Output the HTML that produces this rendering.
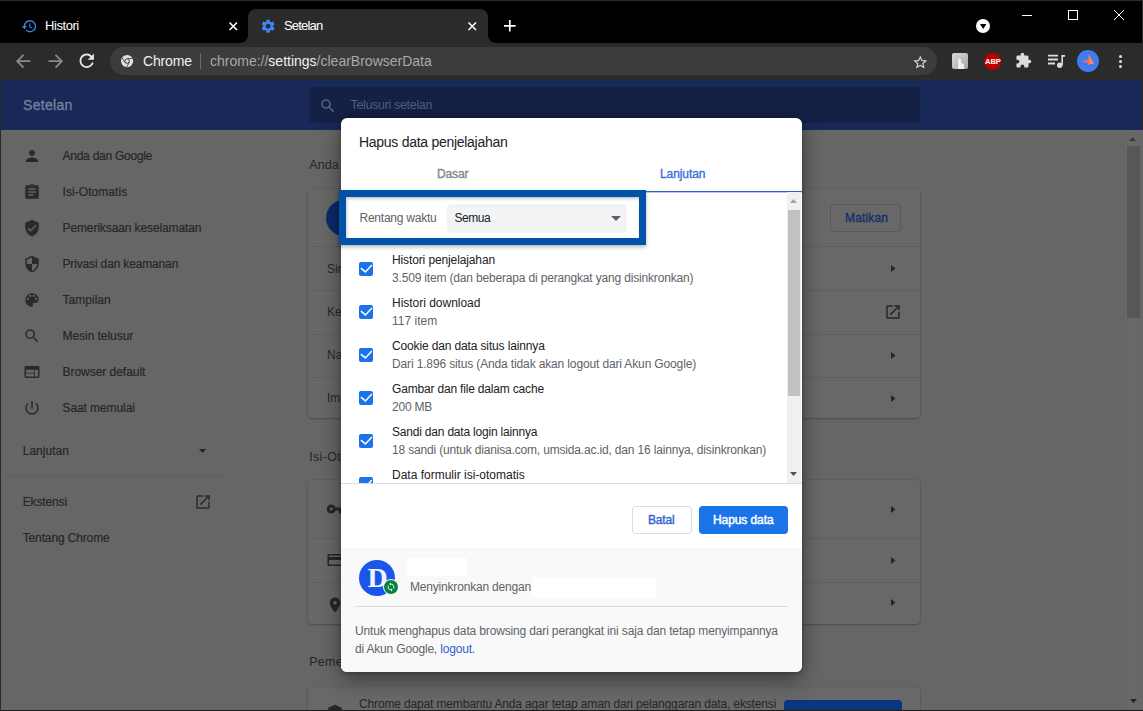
<!DOCTYPE html>
<html><head><meta charset="utf-8">
<style>
*{margin:0;padding:0;box-sizing:border-box}
html,body{width:1143px;height:711px;overflow:hidden;background:#000;font-family:"Liberation Sans",sans-serif}
.a{position:absolute}
.t{position:absolute;white-space:nowrap;line-height:1}
svg{position:absolute;overflow:visible}
.sec{font-size:12px;color:#5f6368}
.card{background:#686868;border-radius:4px;box-shadow:0 0 0 1px rgba(0,0,0,.06),0 1px 2px rgba(0,0,0,.2)}
.sep{left:308px;width:612px;height:1px;background:#5f5f5f}
.side{font-size:12px;color:#262626;-webkit-text-stroke:0.2px #262626}
.main{font-size:12px;color:#262626}
.cb{width:14px;height:14px;border-radius:2px;background:#1a73e8}
</style></head><body>
<div class="a" style="left:0;top:0;width:1143px;height:711px;overflow:hidden">

<!-- TAB STRIP -->
<div class="a" style="left:0;top:0;width:1143px;height:43px;background:#000"></div>
<div class="a" style="left:0;top:0;width:1143px;height:1px;background:#2a2a2a"></div>
<!-- tab 1 -->
<svg style="left:20.9px;top:17.7px" width="16.5" height="16.5" viewBox="0 0 24 24"><path fill="#3f86f5" d="M13 3a9 9 0 0 0-9 9H1l3.89 3.89.07.14L9 12H6c0-3.87 3.13-7 7-7s7 3.13 7 7-3.13 7-7 7c-1.93 0-3.68-.79-4.94-2.06l-1.42 1.42A8.954 8.954 0 0 0 13 21a9 9 0 0 0 0-18zm-1 5v5l4.28 2.54.72-1.21-3.5-2.08V8H12z"/></svg>
<div class="t" style="left:45px;top:19px;font-size:13px;letter-spacing:-0.44px;color:#fff">Histori</div>
<svg style="left:229px;top:21.5px" width="8.5" height="8.5" viewBox="0 0 8.5 8.5"><path d="M0.5 0.5L8 8M8 0.5L0.5 8" stroke="#fff" stroke-width="1.5"/></svg>
<!-- tab 2 active -->
<svg style="left:240px;top:9px" width="256" height="34" viewBox="0 0 256 34"><path d="M0 34A8 8 0 0 0 8 26V8A8 8 0 0 1 16 0H240A8 8 0 0 1 248 8V26A8 8 0 0 0 256 34z" fill="#2b2b2b"/></svg>
<svg style="left:259.7px;top:17.75px" width="16.3" height="16.3" viewBox="0 0 24 24"><path fill="#3f86f5" d="M19.14 12.94c.04-.3.06-.61.06-.94 0-.32-.02-.64-.07-.94l2.03-1.580a.49.49 0 0 0 .12-.61l-1.920-3.320a.488.488 0 0 0-.59-.22l-2.390.96c-.5-.38-1.030-.7-1.620-.94l-.36-2.540a.484.484 0 0 0-.48-.41h-3.840c-.24 0-.43.17-.47.41l-.36 2.540c-.59.24-1.130.57-1.620.94l-2.390-.96c-.22-.08-.47 0-.59.22L2.740 8.870c-.12.21-.08.47.12.61l2.030 1.580c-.05.3-.09.63-.09.94s.02.64.07.94l-2.030 1.580a.49.49 0 0 0-.12.61l1.920 3.320c.12.22.37.29.59.22l2.390-.96c.5.38 1.030.7 1.620.94l.36 2.540c.05.24.24.41.48.41h3.840c.24 0 .44-.17.47-.41l.36-2.540c.59-.24 1.130-.56 1.620-.94l2.390.96c.22.08.47 0 .59-.22l1.920-3.320c.12-.22.07-.47-.12-.61l-2.010-1.580zM12 15.6c-1.980 0-3.6-1.620-3.6-3.6s1.620-3.6 3.6-3.6 3.6 1.620 3.6 3.6-1.620 3.6-3.6 3.6z"/></svg>
<div class="t" style="left:284px;top:19px;font-size:13px;letter-spacing:-0.83px;color:#fff">Setelan</div>
<svg style="left:467.6px;top:21.5px" width="8.5" height="8.5" viewBox="0 0 8.5 8.5"><path d="M0.5 0.5L8 8M8 0.5L0.5 8" stroke="#fff" stroke-width="1.5"/></svg>
<!-- plus -->
<svg style="left:504.1px;top:20.2px" width="11.6" height="11.6" viewBox="0 0 11.6 11.6"><path d="M5.8 0V11.6M0 5.8H11.6" stroke="#fff" stroke-width="1.7"/></svg>
<!-- tab search -->
<div class="a" style="left:976px;top:19px;width:14px;height:14px;border-radius:50%;background:#fff"></div>
<svg style="left:979.8px;top:24px" width="6.4" height="5" viewBox="0 0 6.4 5"><path d="M0 0H6.4L3.2 5z" fill="#000"/></svg>
<!-- window controls -->
<div class="a" style="left:1022px;top:15px;width:10px;height:1px;background:#fff"></div>
<div class="a" style="left:1068px;top:10px;width:10px;height:10px;border:1px solid #fff"></div>
<svg style="left:1114px;top:10px" width="10" height="10" viewBox="0 0 10 10"><path d="M0 0L10 10M10 0L0 10" stroke="#fff" stroke-width="1"/></svg>
<div class="a" style="left:1142px;top:0;width:1px;height:711px;background:#2a2a2a"></div>

<!-- TOOLBAR -->
<div class="a" style="left:0;top:43px;width:1142px;height:37px;background:#2b2b2b"></div>
<svg style="left:15.5px;top:54px" width="15" height="15" viewBox="0 0 15 15"><path d="M1.2 7.2H14.5M7.5 0.8L1.2 7.2L7.5 13.6" fill="none" stroke="#8a8a8a" stroke-width="1.8"/></svg>
<svg style="left:48px;top:54px" width="15" height="15" viewBox="0 0 15 15"><path d="M13.8 7.2H0.5M7.5 0.8L13.8 7.2L7.5 13.6" fill="none" stroke="#8a8a8a" stroke-width="1.8"/></svg>
<svg style="left:76.3px;top:50.4px" width="21.5" height="21.5" viewBox="0 0 24 24"><path fill="#e8e8e8" d="M17.65 6.35A7.958 7.958 0 0 0 12 4c-4.42 0-7.99 3.58-7.99 8s3.57 8 7.99 8c3.73 0 6.84-2.55 7.73-6h-2.08A5.99 5.99 0 0 1 12 18c-3.31 0-6-2.690-6-6s2.690-6 6-6c1.66 0 3.14.69 4.22 1.780L13 11h7V4l-2.35 2.35z"/></svg>
<div class="a" style="left:110px;top:46.5px;width:827px;height:28px;border-radius:14px;background:#3c3c3c"></div>
<svg style="left:121px;top:55px" width="12.2" height="12.2" viewBox="0 0 24 24"><circle cx="12" cy="12" r="12" fill="#e0e0e0"/><circle cx="12" cy="12" r="5.2" fill="#3c3c3c"/><circle cx="12" cy="12" r="3.6" fill="#e0e0e0"/><path d="M12 6.8H23.5M7.5 14.6L1.8 4.8M16.5 14.6L10.8 24" stroke="#3c3c3c" stroke-width="1.6"/></svg>
<div class="t" style="left:143px;top:54px;font-size:14px;letter-spacing:-0.16px;color:#f0f0f0">Chrome</div>
<div class="a" style="left:200px;top:53px;width:1px;height:16px;background:#6a6a6a"></div>
<div class="t" style="left:210px;top:54px;font-size:14px;color:#a8a8a8">chrome://<span style="color:#f0f0f0">settings</span>/clearBrowserData</div>
<svg style="left:911.8px;top:53.9px" width="16.6" height="16.6" viewBox="0 0 24 24"><path fill="#ddd" d="M22 9.24l-7.19-.62L12 2 9.19 8.63 2 9.24l5.46 4.73L5.82 21 12 17.27 18.18 21l-1.63-7.03L22 9.24zM12 15.4l-3.76 2.27 1-4.28-3.32-2.88 4.38-.38L12 6.1l1.71 4.04 4.38.38-3.32 2.88 1 4.28L12 15.4z"/></svg>
<!-- extensions -->
<div class="a" style="left:952px;top:53px;width:16px;height:16px;background:linear-gradient(135deg,#d8d8d8,#a8a8a8);border-radius:2px"></div>
<svg style="left:955px;top:55px" width="10" height="14" viewBox="0 0 10 14"><path d="M3 14V5a1.5 1.5 0 0 1 3 0V8l3 1V14z" fill="#efefef"/></svg>
<div class="a" style="left:983.5px;top:52.5px;width:17px;height:17px;border-radius:50%;background:#c00000"></div>
<div class="t" style="left:985px;top:57.5px;font-size:7.6px;font-weight:bold;color:#fff;letter-spacing:-0.1px">ABP</div>
<svg style="left:1015px;top:52px" width="17" height="17" viewBox="0 0 24 24"><path fill="#ddd" d="M20.5 11H19V7c0-1.1-.9-2-2-2h-4V3.5a2.5 2.5 0 0 0-5 0V5H4c-1.1 0-1.99.9-1.99 2v3.8H3.5c1.49 0 2.7 1.21 2.7 2.7s-1.21 2.7-2.7 2.7H2V20c0 1.1.9 2 2 2h3.8v-1.5c0-1.49 1.21-2.7 2.7-2.7 1.49 0 2.7 1.21 2.7 2.7V22H17c1.1 0 2-.9 2-2v-4h1.5a2.5 2.5 0 0 0 0-5z"/></svg>
<svg style="left:1047px;top:53px" width="20" height="16" viewBox="0 0 20 16"><path d="M1 2.7H11M1 6.5H11M1 10.5H8" stroke="#ddd" stroke-width="1.8"/><path d="M15.2 2V12" stroke="#ddd" stroke-width="1.6"/><path d="M15 2H18V3.8H15z" fill="#ddd"/><circle cx="12.7" cy="12.2" r="2.7" fill="#ddd"/></svg>
<div class="a" style="left:1077px;top:50px;width:22px;height:22px;border-radius:50%;background:#3d7ded"></div>
<svg style="left:1077px;top:50px" width="22" height="22" viewBox="0 0 22 22"><path d="M4 11.2L11.5 9.5L11.7 4.5L17 13.5L12.5 14.5L12 15.8L10.5 12.8z" fill="#f06a6a"/><path d="M11.7 4.5L17 13.5L12.5 14.5z" fill="#f58a5a"/></svg>
<div class="a" style="left:1119px;top:55px;width:3px;height:3px;border-radius:50%;background:#ddd"></div>
<div class="a" style="left:1119px;top:60px;width:3px;height:3px;border-radius:50%;background:#ddd"></div>
<div class="a" style="left:1119px;top:65px;width:3px;height:3px;border-radius:50%;background:#ddd"></div>

<!-- PAGE HEADER -->
<div class="a" style="left:0;top:80px;width:1142px;height:50px;background:#182958"></div>
<div class="t" style="left:23px;top:97.8px;font-size:14px;letter-spacing:0.3px;-webkit-text-stroke:0.3px #76819f;color:#76819f">Setelan</div>
<div class="a" style="left:309px;top:87px;width:611px;height:36px;background:#142046;border-radius:2px"></div>
<svg style="left:318.8px;top:97px" width="17.8" height="17.8" viewBox="0 0 24 24"><path fill="#5a6585" d="M15.5 14h-.79l-.28-.27A6.471 6.471 0 0 0 16 9.5 6.5 6.5 0 1 0 9.5 16c1.61 0 3.09-.59 4.23-1.57l.27.28v.79l5 4.99L20.49 19l-4.99-5zm-6 0C7.01 14 5 11.99 5 9.5S7.01 5 9.5 5 14 7.01 14 9.5 11.99 14 9.5 14z"/></svg>
<div class="t" style="left:350.5px;top:99.2px;font-size:12.5px;letter-spacing:-0.33px;color:#565e78">Telusuri setelan</div>

<div class="a" style="left:0;top:130px;width:1143px;height:581px;background:#666"></div>

<!-- SIDEBAR -->
<svg style="left:23px;top:147px" width="18" height="18" viewBox="0 0 24 24"><path fill="#2a2a2a" d="M12 12c2.21 0 4-1.79 4-4s-1.79-4-4-4-4 1.79-4 4 1.79 4 4 4zm0 2c-2.67 0-8 1.34-8 4v2h16v-2c0-2.66-5.33-4-8-4z"/></svg>
<div class="t side" style="left:62.5px;top:149.5px;letter-spacing:-0.244px">Anda dan Google</div>
<svg style="left:23px;top:183px" width="18" height="18" viewBox="0 0 24 24"><path fill="#2a2a2a" d="M19 3h-4.18C14.4 1.84 13.3 1 12 1c-1.3 0-2.4.84-2.82 2H5c-1.1 0-2 .9-2 2v14c0 1.1.9 2 2 2h14c1.1 0 2-.9 2-2V5c0-1.1-.9-2-2-2zm-7 0c.55 0 1 .45 1 1s-.45 1-1 1-1-.45-1-1 .45-1 1-1zm2 14H7v-2h7v2zm3-4H7v-2h10v2zm0-4H7V7h10v2z"/></svg>
<div class="t side" style="left:62.5px;top:185.5px;letter-spacing:0.062px">Isi-Otomatis</div>
<svg style="left:23px;top:219px" width="18" height="18" viewBox="0 0 24 24"><path fill="#2a2a2a" d="M12 1L3 5v6c0 5.55 3.84 10.74 9 12 5.16-1.26 9-6.45 9-12V5l-9-4zm-2 16l-4-4 1.41-1.41L10 14.17l6.59-6.59L18 9l-8 8z"/></svg>
<div class="t side" style="left:62.5px;top:221.5px;letter-spacing:-0.109px">Pemeriksaan keselamatan</div>
<svg style="left:23px;top:255px" width="18" height="18" viewBox="0 0 24 24"><path fill="#2a2a2a" d="M12 1L3 5v6c0 5.55 3.84 10.74 9 12 5.16-1.26 9-6.45 9-12V5l-9-4zm0 10.99h7c-.53 4.12-3.28 7.79-7 8.94V12H5V6.3l7-3.11v8.8z"/></svg>
<div class="t side" style="left:62.5px;top:257.7px;letter-spacing:-0.154px">Privasi dan keamanan</div>
<svg style="left:23px;top:291px" width="18" height="18" viewBox="0 0 24 24"><path fill="#2a2a2a" d="M12 3a9 9 0 0 0 0 18c.83 0 1.5-.67 1.5-1.5 0-.39-.15-.74-.39-1.01-.23-.26-.38-.61-.38-.99 0-.83.67-1.5 1.5-1.5H16c2.76 0 5-2.24 5-5 0-4.42-4.03-8-9-8zm-5.5 9c-.83 0-1.5-.67-1.5-1.5S5.67 9 6.5 9 8 9.67 8 10.5 7.33 12 6.5 12zm3-4C8.67 8 8 7.33 8 6.5S8.67 5 9.5 5s1.5.67 1.5 1.5S10.33 8 9.5 8zm5 0c-.83 0-1.5-.67-1.5-1.5S13.67 5 14.5 5s1.5.67 1.5 1.5S15.33 8 14.5 8zm3 4c-.83 0-1.5-.67-1.5-1.5S16.67 9 17.5 9s1.5.67 1.5 1.5-.67 1.5-1.5 1.5z"/></svg>
<div class="t side" style="left:62.5px;top:293.7px;letter-spacing:0.024px">Tampilan</div>
<svg style="left:23px;top:327px" width="18" height="18" viewBox="0 0 24 24"><path fill="#2a2a2a" d="M15.5 14h-.79l-.28-.27A6.471 6.471 0 0 0 16 9.5 6.5 6.5 0 1 0 9.5 16c1.61 0 3.09-.59 4.23-1.57l.27.28v.79l5 4.99L20.49 19l-4.99-5zm-6 0C7.01 14 5 11.99 5 9.5S7.01 5 9.5 5 14 7.01 14 9.5 11.99 14 9.5 14z"/></svg>
<div class="t side" style="left:62.5px;top:329.6px;letter-spacing:-0.05px">Mesin telusur</div>
<svg style="left:23px;top:363px" width="18" height="18" viewBox="0 0 24 24"><path fill="#2a2a2a" d="M20 4H4c-1.1 0-2 .9-2 2v12c0 1.1.9 2 2 2h16c1.1 0 2-.9 2-2V6c0-1.1-.9-2-2-2zm-5 14H4v-4h11v4zm0-5H4V9h11v4zm5 5h-4V9h4v9z"/></svg>
<div class="t side" style="left:62.5px;top:365.5px;letter-spacing:-0.034px">Browser default</div>
<svg style="left:23px;top:399px" width="18" height="18" viewBox="0 0 24 24"><path fill="#2a2a2a" d="M13 3h-2v10h2V3zm4.83 2.17l-1.42 1.42A6.92 6.92 0 0 1 19 12c0 3.87-3.13 7-7 7A6.995 6.995 0 0 1 7.58 6.58L6.17 5.17A8.932 8.932 0 0 0 3 12a9 9 0 0 0 18 0c0-2.74-1.23-5.18-3.17-6.83z"/></svg>
<div class="t side" style="left:62.5px;top:401.5px;letter-spacing:-0.089px">Saat memulai</div>
<div class="t side" style="left:22.7px;top:445.4px;letter-spacing:0.022px">Lanjutan</div>
<svg style="left:199.4px;top:449.3px" width="7" height="4" viewBox="0 0 7 4"><path d="M0 0H7L3.5 4z" fill="#262626"/></svg>
<div class="a" style="left:0;top:476px;width:225px;height:1px;background:#606060"></div>
<div class="t side" style="left:22.7px;top:495.5px;letter-spacing:-0.137px">Ekstensi</div>
<svg style="left:194px;top:493px" width="18" height="18" viewBox="0 0 24 24"><path fill="#2a2a2a" d="M19 19H5V5h7V3H5a2 2 0 0 0-2 2v14a2 2 0 0 0 2 2h14c1.1 0 2-.9 2-2v-7h-2v7zM14 3v2h3.59l-9.83 9.83 1.41 1.41L19 6.41V10h2V3h-7z"/></svg>
<div class="t side" style="left:22.7px;top:532.2px;letter-spacing:-0.132px">Tentang Chrome</div>

<!-- MAIN -->
<div class="t" style="left:309.2px;top:159px;font-size:12.5px;letter-spacing:0.13px;color:#262626">Anda dan Google</div>
<div class="a card" style="left:308px;top:189px;width:612px;height:229px"></div>
<div class="a" style="left:325.5px;top:200px;width:36px;height:36px;border-radius:50%;background:#0b2a68"></div>
<div class="a" style="left:830px;top:203.5px;width:71px;height:28px;border:1px solid #585858;border-radius:4px"></div>
<div class="t" style="left:845px;top:211.5px;font-size:12px;letter-spacing:0.16px;-webkit-text-stroke:0.35px #14306a;color:#14306a">Matikan</div>
<div class="a sep" style="top:245.5px"></div>
<div class="a sep" style="top:289.5px"></div>
<div class="a sep" style="top:333.5px"></div>
<div class="a sep" style="top:376.5px"></div>
<div class="t main" style="left:327px;top:263.3px">Sinkronisasi</div>
<div class="t main" style="left:327px;top:306.3px">Kelola</div>
<div class="t main" style="left:327px;top:349.3px">Nama</div>
<div class="t main" style="left:327px;top:392.3px">Impor</div>
<svg style="left:890.5px;top:264.5px" width="4.5" height="7" viewBox="0 0 4.5 7"><path d="M0 0L4.5 3.5L0 7z" fill="#262626"/></svg>
<svg style="left:884px;top:302.7px" width="18" height="18" viewBox="0 0 24 24"><path fill="#262626" d="M19 19H5V5h7V3H5a2 2 0 0 0-2 2v14a2 2 0 0 0 2 2h14c1.1 0 2-.9 2-2v-7h-2v7zM14 3v2h3.59l-9.830 9.830 1.410 1.410L19 6.410V10h2V3h-7z"/></svg>
<svg style="left:890.5px;top:351.5px" width="4.5" height="7" viewBox="0 0 4.5 7"><path d="M0 0L4.5 3.5L0 7z" fill="#262626"/></svg><svg style="left:890.5px;top:394.5px" width="4.5" height="7" viewBox="0 0 4.5 7"><path d="M0 0L4.5 3.5L0 7z" fill="#262626"/></svg>
<div class="t main" style="left:309.3px;top:451.2px;font-size:12.5px;letter-spacing:0.3px">Isi-Otomatis</div>
<div class="a card" style="left:308px;top:480px;width:612px;height:144px"></div>
<div class="a sep" style="top:537.5px"></div>
<div class="a sep" style="top:581.5px"></div>
<svg style="left:326px;top:500px" width="18" height="18" viewBox="0 0 24 24"><path fill="#262626" d="M12.65 10A5.99 5.99 0 0 0 7 6c-3.31 0-6 2.69-6 6s2.69 6 6 6a5.99 5.99 0 0 0 5.65-4H17v4h4v-4h2v-4H12.65zM7 14c-1.1 0-2-.9-2-2s.9-2 2-2 2 .9 2 2-.9 2-2 2z"/></svg>
<svg style="left:326px;top:551px" width="18" height="18" viewBox="0 0 24 24"><path fill="#262626" d="M20 4H4c-1.11 0-1.99.89-1.99 2L2 18c0 1.11.89 2 2 2h16c1.11 0 2-.89 2-2V6c0-1.11-.89-2-2-2zm0 14H4v-6h16v6zm0-10H4V6h16v2z"/></svg>
<svg style="left:326px;top:596px" width="18" height="18" viewBox="0 0 24 24"><path fill="#262626" d="M12 2C8.13 2 5 5.13 5 9c0 5.25 7 13 7 13s7-7.75 7-13c0-3.87-3.13-7-7-7zm0 9.5a2.5 2.5 0 0 1 0-5 2.5 2.5 0 0 1 0 5z"/></svg>
<svg style="left:890.5px;top:505.5px" width="4.5" height="7" viewBox="0 0 4.5 7"><path d="M0 0L4.5 3.5L0 7z" fill="#262626"/></svg><svg style="left:890.5px;top:556.5px" width="4.5" height="7" viewBox="0 0 4.5 7"><path d="M0 0L4.5 3.5L0 7z" fill="#262626"/></svg><svg style="left:890.5px;top:599.0px" width="4.5" height="7" viewBox="0 0 4.5 7"><path d="M0 0L4.5 3.5L0 7z" fill="#262626"/></svg>
<div class="t main" style="left:309.2px;top:656px;font-size:12.5px;letter-spacing:0.3px">Pemeriksaan keselamatan</div>
<div class="a card" style="left:308px;top:687px;width:612px;height:60px"></div>
<svg style="left:326px;top:704px" width="18" height="18" viewBox="0 0 24 24"><path fill="#262626" d="M12 1L3 5v6c0 5.55 3.84 10.74 9 12 5.16-1.26 9-6.45 9-12V5l-9-4z"/></svg>
<div class="t main" style="left:359px;top:698px;letter-spacing:-0.15px">Chrome dapat membantu Anda agar tetap aman dari pelanggaran data, ekstensi</div>
<div class="a" style="left:783.5px;top:700px;width:118px;height:30px;border-radius:4px;background:#0c3580"></div>

<!-- page scrollbar -->
<div class="a" style="left:1126px;top:130px;width:16px;height:579px;background:#686868"></div>
<div class="a" style="left:1127px;top:146px;width:13px;height:172px;background:#575757"></div>
<svg style="left:1129px;top:136.5px" width="7" height="4" viewBox="0 0 7 4"><path d="M0 4H7L3.5 0z" fill="#3a3a3a"/></svg>
<svg style="left:1130px;top:699px" width="7" height="4" viewBox="0 0 7 4"><path d="M0 0H7L3.5 4z" fill="#202020"/></svg>
<div class="a" style="left:0;top:710px;width:1143px;height:1px;background:#1e1e1e"></div>
<div class="a" style="left:0;top:80px;width:1px;height:631px;background:#2a2a2a"></div>

<!-- DIALOG -->
<div class="a" style="left:341px;top:118px;width:461px;height:554px;background:#fff;border-radius:6px;box-shadow:0 7px 22px rgba(0,0,0,.42),0 1px 4px rgba(0,0,0,.25);overflow:hidden">
  <div class="t" style="left:18px;top:16.7px;font-size:14px;letter-spacing:-0.28px;color:#202124">Hapus data penjelajahan</div>
  <div class="t" style="left:96px;top:50px;font-size:12px;letter-spacing:-0.15px;-webkit-text-stroke:0.35px #80868b;color:#80868b">Dasar</div>
  <div class="t" style="left:319px;top:50px;font-size:12px;letter-spacing:-0.08px;-webkit-text-stroke:0.35px #3a6fd8;color:#3a6fd8">Lanjutan</div>
  <div class="a" style="left:0;top:73px;width:461px;height:1px;background:#e0e0e0"></div>
  <div class="a" style="left:231px;top:73px;width:230px;height:1px;background:#2d62c8"></div><div class="a" style="left:231px;top:74px;width:230px;height:1px;background:rgba(45,98,200,.35)"></div>
  <!-- scroll area -->
  <div class="a" style="left:0;top:365px;width:461px;height:1px;background:#dadce0"></div>
  <div class="a" style="left:446px;top:74px;width:14px;height:291px;background:#f0f0f0"></div>
  <div class="a" style="left:447px;top:92px;width:12px;height:186px;background:#c1c1c1"></div>
  <svg style="left:449px;top:81px" width="7" height="4" viewBox="0 0 7 4"><path d="M0 4H7L3.5 0z" fill="#a3a3a3"/></svg>
  <svg style="left:449px;top:354px" width="7" height="4" viewBox="0 0 7 4"><path d="M0 0H7L3.5 4z" fill="#505050"/></svg>

  <div class="a cb" style="left:18px;top:144px"><svg style="left:0;top:0" width="14" height="14" viewBox="0 0 14 14"><path d="M1.9 6.1L6.4 9.9L12.9 3.1" fill="none" stroke="#fff" stroke-width="1.5"/></svg></div>
  <div class="t" style="left:51px;top:136px;font-size:12px;letter-spacing:-0.12px;color:#202124">Histori penjelajahan</div>
  <div class="t sec" style="left:51px;top:154px;letter-spacing:-0.17px">3.509 item (dan beberapa di perangkat yang disinkronkan)</div>
  <div class="a cb" style="left:18px;top:187px"><svg style="left:0;top:0" width="14" height="14" viewBox="0 0 14 14"><path d="M1.9 6.1L6.4 9.9L12.9 3.1" fill="none" stroke="#fff" stroke-width="1.5"/></svg></div>
  <div class="t" style="left:51px;top:179px;font-size:12px;letter-spacing:-0.02px;color:#202124">Histori download</div>
  <div class="t sec" style="left:51px;top:197px;letter-spacing:0px">117 item</div>
  <div class="a cb" style="left:18px;top:230px"><svg style="left:0;top:0" width="14" height="14" viewBox="0 0 14 14"><path d="M1.9 6.1L6.4 9.9L12.9 3.1" fill="none" stroke="#fff" stroke-width="1.5"/></svg></div>
  <div class="t" style="left:51px;top:222px;font-size:12px;letter-spacing:-0.14px;color:#202124">Cookie dan data situs lainnya</div>
  <div class="t sec" style="left:51px;top:240px;letter-spacing:-0.14px">Dari 1.896 situs (Anda tidak akan logout dari Akun Google)</div>
  <div class="a cb" style="left:18px;top:273px"><svg style="left:0;top:0" width="14" height="14" viewBox="0 0 14 14"><path d="M1.9 6.1L6.4 9.9L12.9 3.1" fill="none" stroke="#fff" stroke-width="1.5"/></svg></div>
  <div class="t" style="left:51px;top:265px;font-size:12px;letter-spacing:-0.18px;color:#202124">Gambar dan file dalam cache</div>
  <div class="t sec" style="left:51px;top:283px;letter-spacing:-0.2px">200 MB</div>
  <div class="a cb" style="left:18px;top:316px"><svg style="left:0;top:0" width="14" height="14" viewBox="0 0 14 14"><path d="M1.9 6.1L6.4 9.9L12.9 3.1" fill="none" stroke="#fff" stroke-width="1.5"/></svg></div>
  <div class="t" style="left:51px;top:308px;font-size:12px;letter-spacing:-0.2px;color:#202124">Sandi dan data login lainnya</div>
  <div class="t sec" style="left:51px;top:326px;letter-spacing:-0.17px">18 sandi (untuk dianisa.com, umsida.ac.id, dan 16 lainnya, disinkronkan)</div>
  <div class="a" style="left:0;top:350px;width:446px;height:15px;overflow:hidden">
    <div class="t" style="left:51px;top:1px;font-size:12px;letter-spacing:0px;color:#202124">Data formulir isi-otomatis</div>
    <div class="a cb" style="left:18px;top:9px"><svg style="left:0;top:0" width="14" height="14" viewBox="0 0 14 14"><path d="M1.9 6.1L6.4 9.9L12.9 3.1" fill="none" stroke="#fff" stroke-width="1.5"/></svg></div>
  </div>

  <!-- buttons -->
  <div class="a" style="left:291px;top:388px;width:60px;height:28px;border:1px solid #dadce0;border-radius:4px;background:#fff"></div>
  <div class="t" style="left:307px;top:396px;font-size:12px;letter-spacing:-0.19px;-webkit-text-stroke:0.4px #2f66d0;color:#2f66d0">Batal</div>
  <div class="a" style="left:358px;top:388px;width:89px;height:28px;border-radius:4px;background:#1a73e8"></div>
  <div class="t" style="left:372px;top:396px;font-size:12px;letter-spacing:-0.09px;-webkit-text-stroke:0.45px #fff;color:#fff">Hapus data</div>

  <!-- footer -->
  <div class="a" style="left:0;top:430px;width:461px;height:124px;background:#f9f9f9"></div>
  <div class="a" style="left:18px;top:442px;width:36px;height:36px;border-radius:50%;background:#1a56e8"></div>
  <div class="t" style="left:26.5px;top:446px;font-size:28px;font-family:'Liberation Serif',serif;font-weight:bold;color:#eef6ff">D</div>
  <div class="a" style="left:42px;top:461px;width:16px;height:16px;border-radius:50%;background:#0b8043;border:1px solid #fff"></div>
  <svg style="left:45px;top:464px" width="10" height="10" viewBox="0 0 24 24"><path fill="#e8fff0" d="M12 4V1L8 5l4 4V6c3.31 0 6 2.69 6 6 0 1.01-.25 1.97-.7 2.8l1.46 1.46A7.93 7.93 0 0 0 20 12c0-4.42-3.58-8-8-8zm0 14c-3.31 0-6-2.69-6-6 0-1.01.25-1.97.7-2.8L5.24 7.74A7.93 7.93 0 0 0 4 12c0 4.42 3.58 8 8 8v3l4-4-4-4v3z"/></svg>
  <div class="a" style="left:66px;top:440px;width:60px;height:18px;background:#fff"></div>
  <div class="t sec" style="left:69px;top:463px;letter-spacing:-0.19px">Menyinkronkan dengan</div>
  <div class="a" style="left:191px;top:459px;width:124px;height:21px;background:#fff"></div>
  <div class="a" style="left:14px;top:488px;width:433px;height:1px;background:#dadce0"></div>
  <div class="t sec" style="left:14px;top:507px;letter-spacing:-0.15px">Untuk menghapus data browsing dari perangkat ini saja dan tetap menyimpannya</div>
  <div class="t sec" style="left:14px;top:525px;letter-spacing:-0.18px">di Akun Google, <span style="color:#2f62c8">logout</span>.</div>
</div>

<!-- annotation box -->
<div class="a" style="left:339px;top:190px;width:307px;height:55px;border:7px solid #0052a8;box-shadow:0 2px 4px rgba(0,0,0,.3), inset 1px 2px 3px rgba(0,0,0,.22)"></div>
<div class="t sec" style="left:359.5px;top:212px;letter-spacing:-0.24px">Rentang waktu</div>
<div class="a" style="left:447px;top:204px;width:180px;height:29px;border-radius:4px;background:#f1f3f4"></div>
<div class="t" style="left:454.5px;top:212px;font-size:12px;letter-spacing:-0.46px;color:#202124">Semua</div>
<svg style="left:611px;top:216px" width="10" height="5" viewBox="0 0 10 5"><path d="M0 0H10L5 5z" fill="#5f6368"/></svg>
</div>
</body></html>
